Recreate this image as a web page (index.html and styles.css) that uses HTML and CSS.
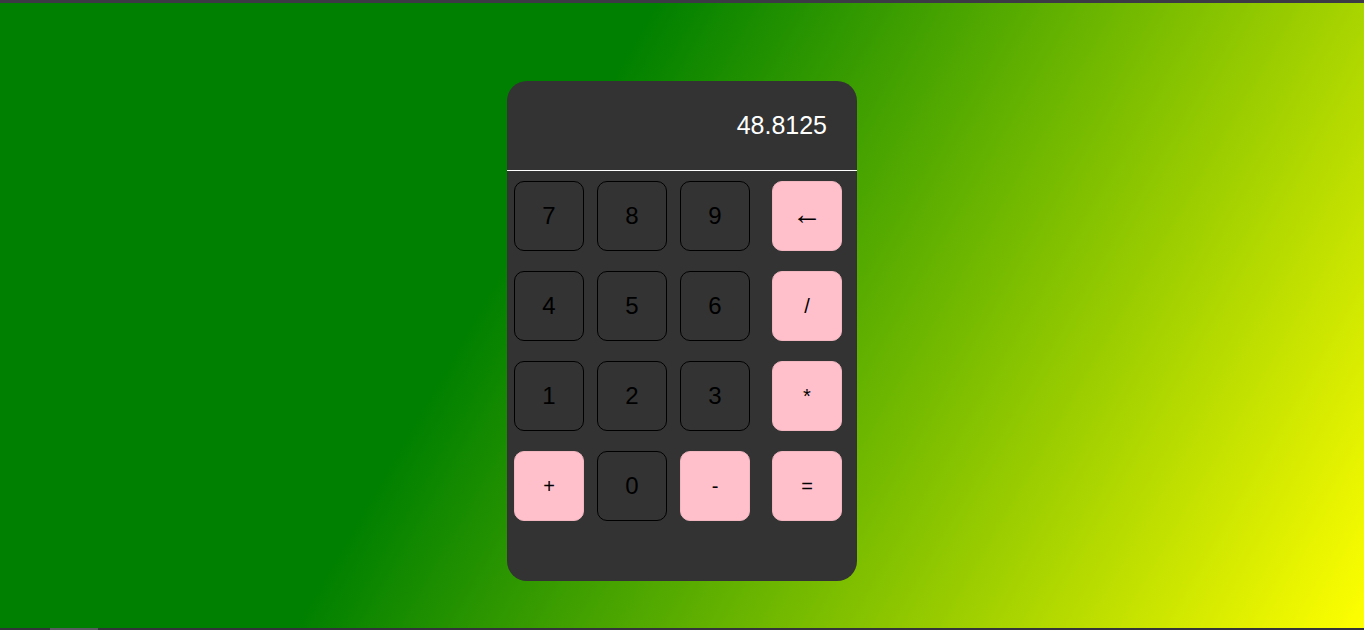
FILE: index.html
```html
<!DOCTYPE html>
<html lang="en">
<head>
<meta charset="utf-8">
<title>Calculator</title>
<link rel="stylesheet" href="styles.css">
</head>
<body>
<div class="frame-top"></div>
<main class="stage">
  <div class="calc">
    <div class="display">48.8125</div>
    <div class="keys">
      <button class="key">7</button>
      <button class="key">8</button>
      <button class="key">9</button>
      <button class="key op end"><span class="arrow">←</span></button>
      <button class="key">4</button>
      <button class="key">5</button>
      <button class="key">6</button>
      <button class="key op end">/</button>
      <button class="key">1</button>
      <button class="key">2</button>
      <button class="key">3</button>
      <button class="key op end">*</button>
      <button class="key op">+</button>
      <button class="key">0</button>
      <button class="key op">-</button>
      <button class="key op end">=</button>
    </div>
  </div>
</main>
<div class="frame-bottom"><span class="thumb"></span></div>
</body>
</html>
```

FILE: styles.css
```css
* { box-sizing: border-box; }
html, body { margin: 0; padding: 0; height: 100%; overflow: hidden; }
body {
  display: flex;
  flex-direction: column;
  font-family: "Liberation Sans", Arial, sans-serif;
  background: #3a3a44;
}
.frame-top {
  height: 3px;
  flex: none;
  background: #3c3b45;
}
.stage {
  flex: 1;
  display: flex;
  justify-content: center;
  align-items: flex-start;
  padding-top: 78px;
  background: linear-gradient(120deg, #008000 38%, #ffff00 100%);
}
.frame-bottom {
  height: 2px;
  flex: none;
  background: #34333c;
  display: flex;
}
.thumb {
  margin-left: 50px;
  width: 48px;
  height: 2px;
  background: #5b5a62;
}
.calc {
  width: 350px;
  height: 500px;
  background: #333333;
  border-radius: 20px;
  overflow: hidden;
}
.display {
  height: 90px;
  border-bottom: 1px solid #ffffff;
  display: flex;
  align-items: center;
  justify-content: flex-end;
  padding-right: 30px;
  color: #ffffff;
  font-size: 25px;
}
.keys {
  display: grid;
  grid-template-columns: 70px 70px 70px 1fr;
  column-gap: 13px;
  row-gap: 20px;
  padding: 10px 15px 0 7px;
}
.key {
  width: 70px;
  height: 70px;
  border: 1px solid #000000;
  border-radius: 10px;
  background: #333333;
  color: #000000;
  font-family: "Liberation Sans", Arial, sans-serif;
  font-size: 24px;
  padding: 0;
  display: flex;
  align-items: center;
  justify-content: center;
}
.key.op {
  background: #ffc0cb;
  border: 1px solid #f2b6c1;
  color: #000000;
  font-size: 20px;
}
.arrow {
  font-size: 30px;
  line-height: 1;
  margin-top: -4px;
}
.key.end { justify-self: end; }
```
